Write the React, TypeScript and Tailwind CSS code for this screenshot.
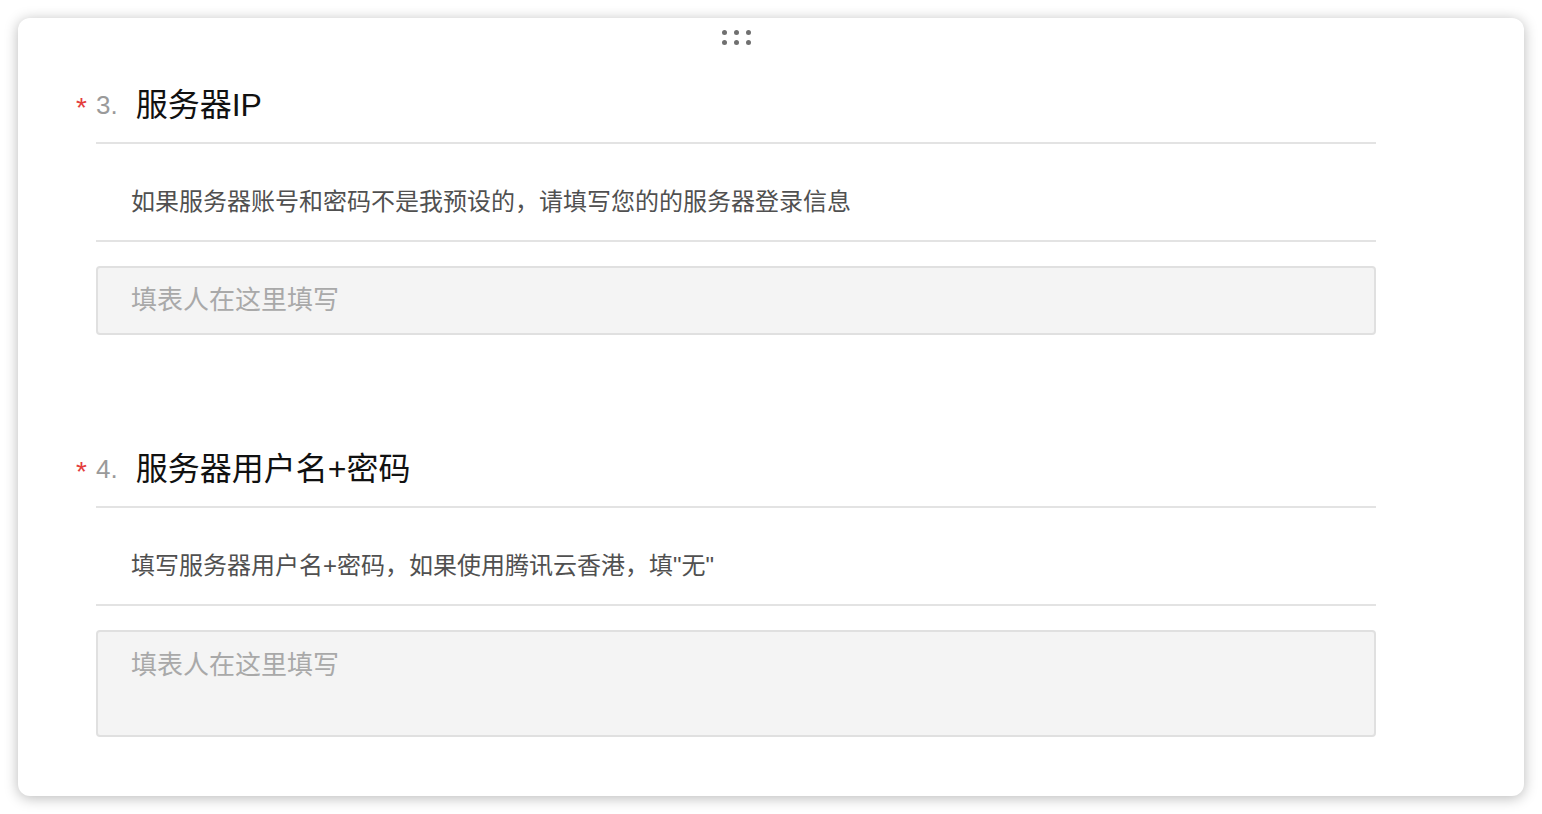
import React from "react";

function Question({
  num,
  title,
  desc,
  tall,
  first,
}: {
  num: string;
  title: string;
  desc: string;
  tall?: boolean;
  first?: boolean;
}) {
  return (
    <div className={first ? "mt-[40px]" : "mt-[114px]"}>
      <div className="-ml-[20px] flex h-[40px] items-center">
        <span className="w-[20px] self-start pt-[9px] text-[28px] leading-none text-[#e43d3d]">*</span>
        <span className="mr-[18px] text-[26px] leading-[40px] text-[#9a9a9a]">{num}</span>
        <span className="text-[32px] leading-[40px] text-[#111111]">{title}</span>
      </div>
      <div className="mt-[17px] h-[2px] bg-[#e3e3e3]" />
      <div className="pb-[22px] pl-[35px] pt-[42px] text-[24px] leading-[32px] text-[#505050]">{desc}</div>
      <div className="h-[2px] bg-[#e3e3e3]" />
      {tall ? (
        <textarea
          placeholder="填表人在这里填写"
          className="mt-[24px] block h-[107px] w-full resize-none rounded-[4px] border-2 border-[#e0e0e0] bg-[#f4f4f4] pl-[33px] pt-[15px] text-[26px] leading-[36px] text-[#333] outline-none placeholder:text-[#a9a9a9]"
        />
      ) : (
        <input
          placeholder="填表人在这里填写"
          className="mt-[24px] block h-[69px] w-full rounded-[4px] border-2 border-[#e0e0e0] bg-[#f4f4f4] pl-[33px] text-[26px] leading-[36px] text-[#333] outline-none placeholder:text-[#a9a9a9]"
        />
      )}
    </div>
  );
}

export default function App() {
  return (
    <div className="min-h-[814px] w-[1542px] bg-white pt-[18px] font-['Liberation_Sans','Noto_Sans_CJK_SC',sans-serif]">
      <div className="ml-[18px] h-[778px] w-[1506px] rounded-[12px] bg-white shadow-[0_2px_14px_rgba(0,0,0,0.28)]">
        <div className="ml-[78px] w-[1280px] pt-[12px]">
          <div className="flex justify-center">
            <div className="grid grid-cols-3 gap-x-[7px] gap-y-[5px]">
              {Array.from({ length: 6 }).map((_, i) => (
                <span key={i} className="block h-[5px] w-[5px] rounded-full bg-[#707070]" />
              ))}
            </div>
          </div>
          <Question
            first
            num="3."
            title="服务器IP"
            desc="如果服务器账号和密码不是我预设的，请填写您的的服务器登录信息"
          />
          <Question
            num="4."
            title="服务器用户名+密码"
            desc={'填写服务器用户名+密码，如果使用腾讯云香港，填"无"'}
            tall
          />
        </div>
      </div>
    </div>
  );
}
